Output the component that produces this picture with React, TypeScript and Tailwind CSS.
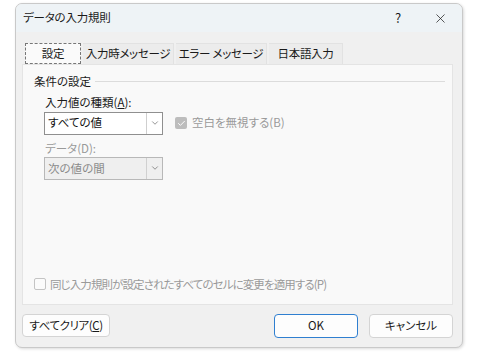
import { ChevronDown, Check, X } from "lucide-react";

function Select({ value, disabled }: { value: string; disabled?: boolean }) {
  return (
    <div
      className={`flex h-[23px] w-[119px] items-stretch border ${
        disabled ? "border-[#b8b8b8] bg-[#efefef] text-[#8a8a8a]" : "border-[#8f8f8f] bg-white text-[#111]"
      }`}
    >
      <div className="flex flex-1 items-center pl-[3px] text-[11.5px]">{value}</div>
      <div className={`flex w-[16px] items-center justify-center border-l ${disabled ? "border-[#d0d0d0]" : "border-[#cfcfcf]"}`}>
        <ChevronDown size={10} strokeWidth={1.5} className="text-[#555]" />
      </div>
    </div>
  );
}

export default function App() {
  return (
    <div className="h-[355px] w-[478px] bg-white pl-[15px] pt-[3px] font-['Noto_Sans_CJK_JP','Noto_Sans',sans-serif] [font-feature-settings:'palt'] whitespace-nowrap">
      <div className="flex h-[345px] w-[448px] flex-col overflow-hidden rounded-[7px] border border-[#c9c9c9] bg-[#f0f0f0] shadow-[1px_1px_3px_rgba(0,0,0,0.15)]">
        {/* タイトルバー */}
        <div className="flex h-[28px] items-center bg-[#eef3f6] pl-[7px] pr-[14px] text-[11.5px] tracking-[-0.2px] text-[#1a1a1a]">
          <span>データの入力規則</span>
          <span className="ml-auto mr-[32px] text-[13px]">?</span>
          <X size={15} strokeWidth={1.2} className="text-[#222]" />
        </div>

        {/* タブ */}
        <div className="mt-[11px] flex pl-[9px] text-[11.5px] tracking-[-0.3px] text-[#1a1a1a]">
          <div className="flex h-[21px] w-[56px] items-center justify-center border border-dashed border-[#777] bg-[#fafafa]">
            設定
          </div>
          <div className="ml-[2px] flex h-[21px] w-[91px] items-center justify-center border-t border-r border-[#e2e2e2] bg-[#ececec]">
            入力時メッセージ
          </div>
          <div className="ml-[2px] flex h-[21px] w-[91px] items-center justify-center border-t border-r border-[#e2e2e2] bg-[#ececec]">
            エラー メッセージ
          </div>
          <div className="ml-[2px] flex h-[21px] w-[74px] items-center justify-center border-t border-r border-[#e2e2e2] bg-[#ececec]">
            日本語入力
          </div>
        </div>

        {/* パネル */}
        <div className="ml-[6px] flex h-[241px] w-[431px] flex-col border border-[#e4e4e4] bg-[#f9f9f9] pl-[11px] pr-[7px] text-[11.5px]">
          <div className="mt-[8px] flex items-center text-[#1a1a1a]">
            <span>条件の設定</span>
            <div className="ml-[4px] h-px flex-1 bg-[#dcdcdc]" />
          </div>
          <div className="ml-[11px] mt-[4px] text-[#1a1a1a]">
            入力値の種類(<span className="underline">A</span>):
          </div>
          <div className="ml-[10px] flex items-center">
            <Select value="すべての値" />
            <div className="ml-[12px] flex items-center text-[#9a9a9a]">
              <div className="flex h-[12px] w-[12px] items-center justify-center rounded-[2px] bg-[#bdbdbd]">
                <Check size={9} strokeWidth={2.5} className="text-white" />
              </div>
              <span className="ml-[5px]">空白を無視する(B)</span>
            </div>
          </div>
          <div className="ml-[11px] mt-[5px] text-[#9a9a9a]">データ(D):</div>
          <div className="ml-[10px]">
            <Select value="次の値の間" disabled />
          </div>
          <div className="mt-auto mb-[11px] flex items-center text-[#9a9a9a]">
            <div className="h-[12px] w-[12px] rounded-[2px] border border-[#c4c4c4] bg-[#fbfbfb]" />
            <span className="ml-[4px] tracking-[-0.9px]">同じ入力規則が設定されたすべてのセルに変更を適用する(P)</span>
          </div>
        </div>

        {/* ボタン */}
        <div className="mt-[9px] flex pl-[6px] text-[11.5px] text-[#1a1a1a]">
          <button className="flex h-[23px] w-[88px] items-center justify-center rounded-[4px] border border-[#d4d4d4] bg-[#fdfdfd] tracking-[-0.4px]">
            すべてクリア(<span className="underline">C</span>)
          </button>
          <button className="ml-auto flex h-[24px] w-[84px] items-center justify-center rounded-[4px] border border-[#2f7fd0] bg-[#fdfdfd]">
            OK
          </button>
          <button className="ml-[11px] mr-[9px] flex h-[24px] w-[84px] items-center justify-center rounded-[4px] border border-[#d4d4d4] bg-[#fdfdfd]">
            キャンセル
          </button>
        </div>
      </div>
    </div>
  );
}
